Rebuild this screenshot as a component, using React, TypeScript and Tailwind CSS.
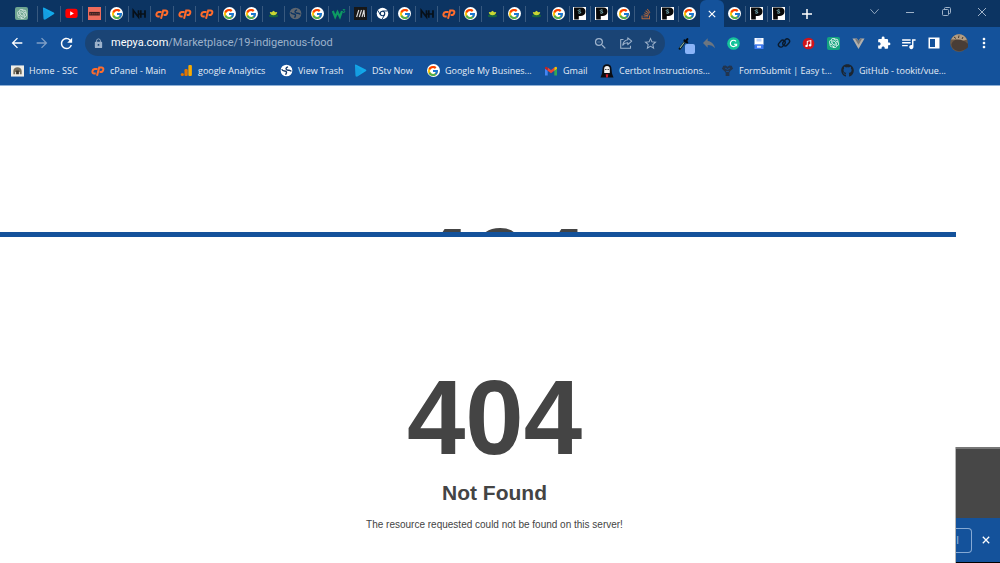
import type { ReactNode } from "react";
import { FcGoogle } from "react-icons/fc";
import { FaGithub, FaStackOverflow } from "react-icons/fa";
import { SiOpenai } from "react-icons/si";
import {
  MdArrowBack,
  MdArrowForward,
  MdExtension,
  MdLock,
  MdMoreVert,
  MdOutlineZoomOut,
  MdQueueMusic,
  MdRefresh,
  MdReply,
  MdStarBorder,
} from "react-icons/md";

function Google() {
  return (
    <span className="flex size-[13px] items-center justify-center rounded-full bg-white">
      <FcGoogle className="size-[12px]" />
    </span>
  );
}

function OpenAi() {
  return (
    <span className="flex size-[13px] items-center justify-center rounded-xs bg-[#6fa591]">
      <SiOpenai className="size-[10px] text-[#dcebe5]" />
    </span>
  );
}

function Dstv() {
  return (
    <svg viewBox="0 0 14 14" className="size-[13px]">
      <path d="M1 1.200Q1.200.200 2.400.700L12.600 5.800q1.500.900 0 2L4 13.300q-2.200.900-2.300-1Z" fill="#12a9ea" />
      <path d="M1 1.200 9 7.600l-5 5.700q-2.200.900-2.300-1Z" fill="#1b8fd6" opacity=".4" />
    </svg>
  );
}

function Youtube() {
  return (
    <svg viewBox="0 0 14 14" className="size-[13px]">
      <rect x="0.400" y="2" width="13.200" height="9.800" rx="2.400" fill="#f00" />
      <path d="m5.600 4.600 4 2.300-4 2.300Z" fill="#fff" />
    </svg>
  );
}

function Coral() {
  return (
    <svg viewBox="0 0 13 13" className="size-[13px]">
      <path d="M0 0h13v13H0Z" fill="#ee6c5c" />
      <path d="M1.200 4.900h10.600v3.600H1.200Z" fill="#3c2020" />
      <path d="M2.200 6h1v1.500h-1Zm2 0h1.200v1.500H4.200Zm2.200 0h1v1.500h-1Zm2 0h1v1.500h-1Zm2 0h.8v1.500h-.8Z" fill="#8c443c" />
    </svg>
  );
}

function Nh() {
  return (
    <svg viewBox="0 0 14 14" className="size-[14px]" fill="none" stroke="#071019" strokeWidth="1.700">
      <path d="M1.300 10.800V3.500L6.500 10V3.200M8.800 3.200v7.600M13 3.200v7.600M6.500 7H13" />
    </svg>
  );
}

function Cpanel() {
  return (
    <svg viewBox="0 0 14 12" className="h-[12px] w-[14px]" fill="none" stroke="#ff6c2c" strokeWidth="2">
      <path d="M6.600 3.900H3.700Q1.900 4 1.400 6.200 1.200 8.500 3.300 8.600h1.400" />
      <path d="M6 10.800 8.200 2.400h2.200q2.300.1 1.900 2.400-.5 2.300-2.600 2.300H8.600" />
    </svg>
  );
}

function Lotus() {
  return (
    <svg viewBox="0 0 14 14" className="size-[13px]">
      <ellipse cx="7" cy="9.600" rx="5" ry="1.500" fill="#17653f" />
      <path d="M3 5.300 5 5.600 7 4l2 1.600 2-.3Q10.500 8.800 7 8.800T3 5.300Z" fill="#c9d832" />
    </svg>
  );
}

function Globe({ dim = false }: { dim?: boolean }) {
  return (
    <svg viewBox="0 0 14 14" className="size-[13px]">
      <circle cx="7" cy="7" r="6.300" fill={dim ? "#5e6670" : "#fff"} />
      <path
        d="M1.800 5.600q1 2 3.200 1.900 2.200.1 2 2L6 11.600M12.300 8q-1.300-1.600-3.200-1.300-2.400.2-2.700-1.600.2-1.600 2.300-2"
        fill="none"
        stroke={dim ? "#0c3462" : "#14396a"}
        strokeWidth="1.500"
      />
    </svg>
  );
}

function W3() {
  return (
    <svg viewBox="0 0 14 14" className="size-[14px]" fill="none" stroke="#0d9a62">
      <path d="m.8 4 2.400 6L5.500 5l2.400 5L10 4" strokeWidth="2.200" />
      <path d="M10.800 2.500h2l-1 1.200q1.300.2 1 1.200t-1.900.4" strokeWidth=".9" />
    </svg>
  );
}

function Mono() {
  return (
    <svg viewBox="0 0 13 13" className="size-[13px]">
      <path d="M0 0h13v13H0Z" fill="#171717" />
      <path d="m2.600 10 2.200-7M5.300 10l2.200-7M8 10l2-7 .5 7" fill="none" stroke="#ddd" strokeWidth="1.100" />
    </svg>
  );
}

function Chrome() {
  return (
    <svg viewBox="0 0 14 14" className="size-[13px]">
      <circle cx="7" cy="7" r="6.200" fill="#fff" />
      <circle cx="7" cy="7" r="2.400" fill="#fff" stroke="#0c3462" strokeWidth="1.200" />
      <path d="M7 4.300h5.500M4.600 8.300 1.900 3.600M9.300 8.500 6.600 13" stroke="#0c3462" />
    </svg>
  );
}

function Ps() {
  return (
    <svg viewBox="0 0 13 13" className="size-[13px]">
      <path d="M0 0h13v13H0Z" fill="#fff" />
      <path d="M1 .5h7.500Q12.500.8 12.500 4.500T8 9H5.800v3.500H1.200Z" fill="#080808" />
      <path d="M7.700 3.100Q5.200 2.300 5.200 3.500q.2.900 1.400 1 1.400.2 1.200 1.200-.6.9-2.600.2" fill="none" stroke="#7fb9c2" />
    </svg>
  );
}

function StackOverflow() {
  return <FaStackOverflow className="size-[12px] text-[#b8693b]" />;
}

function Gmail() {
  return (
    <svg viewBox="0 0 14 14" className="size-[14px]">
      <path d="M1 4v7.500h2.700V5.800Z" fill="#4285f4" />
      <path d="M13 4v7.500h-2.700V5.800Z" fill="#34a853" />
      <path d="M3.700 3.500 7 6l3.300-2.500v3.200L7 9.200 3.700 6.700Z" fill="#ea4335" />
      <path d="M1 4.200Q1.200 1.800 3.700 3.500v3.200L1 4.700Z" fill="#c5221f" />
      <path d="M13 4.200q-.2-2.400-2.700-.7v3.200l2.700-2Z" fill="#fbbc04" />
    </svg>
  );
}

function Certbot() {
  return (
    <svg viewBox="0 0 14 14" className="size-[14px]">
      <path d="M2.500 5Q2.500.3 7 .3T11.500 5l.5 4.500 1.500 4H.5l1.500-4Z" fill="#0b0d12" />
      <path d="M4.200 4.800Q4.300 2 7 2t2.800 2.800V9H4.200Z" fill="#f2f2f2" />
      <path d="M5.200 5h1.200v1H5.200Zm2.400 0h1.200v1H7.600Z" fill="#222" />
      <path d="M5.700 10.200h2.600l-.5 3.300H6.200Z" fill="#d51f2b" />
    </svg>
  );
}

function FormSubmit() {
  return (
    <svg viewBox="0 0 14 14" className="size-[13px]">
      <path d="M2.500 2 5 1.500 7 3l2-1.500 2.500.5 1.500 3-2.500 2-.8 1L9 9.500V13H5V9.500L4 8 1 5Z" fill="#22354f" />
      <path d="M4.500 4.500 7 5.800l2.500-1.300M5.500 8h3" fill="none" stroke="#14529b" />
    </svg>
  );
}

function Analytics() {
  return (
    <svg viewBox="0 0 14 14" className="size-[13px]">
      <rect x="9" y="1" width="3.800" height="12" rx="1.200" fill="#f9ab00" />
      <rect x="4.800" y="5.500" width="3.500" height="7.500" rx="1.200" fill="#e37400" />
      <circle cx="2.500" cy="11.300" r="1.700" fill="#e37400" />
    </svg>
  );
}

function Ssc() {
  return (
    <svg viewBox="0 0 14 12" className="h-[12px] w-[13px]">
      <path d="M0 0h14v12H0Z" fill="#efede6" />
      <path d="M2.500 9.500V6Q3 2 7 2t4.500 4v3.500h-2V7h-5v2.500Z" fill="#77705f" />
      <path d="M5.500 5.500h3v4h-3Z" fill="#39342b" />
    </svg>
  );
}

function Share() {
  return (
    <svg viewBox="0 0 14 14" className="size-[14px]" fill="none" stroke="currentColor" strokeWidth="1.100" strokeLinejoin="round">
      <path d="M4.500 3.500H1.700v8.800h9.800V9.800M8.800 1.800l3.900 3.400-3.900 3.400V6.700Q5.500 6.500 3.800 9.200 4.500 4.500 8.800 3.800Z" />
    </svg>
  );
}

function Cross({ className }: { className: string }) {
  return (
    <svg viewBox="0 0 10 10" className={className} fill="none" stroke="currentColor">
      <path d="m1 1 8 8M9 1 1 9" />
    </svg>
  );
}

type Item = { name: string; icon: ReactNode };

const google: Item = { name: "Google", icon: <Google /> };
const cpanel: Item = { name: "cPanel", icon: <Cpanel /> };
const nh: Item = { name: "NH", icon: <Nh /> };
const lotus: Item = { name: "Lotus", icon: <Lotus /> };
const ps: Item = { name: "PS", icon: <Ps /> };

const firstTabs: Item[] = [
  { name: "DStv", icon: <Dstv /> },
  { name: "YouTube", icon: <Youtube /> },
  { name: "Coral", icon: <Coral /> },
  google,
  nh,
  cpanel,
  cpanel,
  cpanel,
];

const middleTabs: Item[] = [
  google,
  google,
  lotus,
  { name: "Trash", icon: <Globe dim /> },
  google,
  { name: "W3", icon: <W3 /> },
  { name: "M", icon: <Mono /> },
  { name: "Chrome", icon: <Chrome /> },
  google,
  nh,
  cpanel,
  google,
  lotus,
  google,
  lotus,
  google,
  ps,
  ps,
  google,
  { name: "Stack Overflow", icon: <StackOverflow /> },
  ps,
  google,
];

const lastTabs: Item[] = [google, ps, ps];

function TabGroup({ tabs, className, closed }: { tabs: Item[]; className: string; closed?: boolean }) {
  return (
    <div className={`flex items-center ${className}`}>
      {tabs.map((tab, i) => (
        <button
          key={i}
          aria-label={tab.name}
          className={`flex h-[16px] min-w-0 flex-1 items-center justify-center ${
            closed || i < tabs.length - 1 ? "border-r border-[#38597f]" : ""
          }`}
        >
          {tab.icon}
        </button>
      ))}
    </div>
  );
}

const extensions: Item[] = [
  {
    name: "Color picker",
    icon: (
      <span className="relative flex size-[20px] items-center justify-center">
        <svg viewBox="0 0 14 14" className="size-[13px]" fill="none" strokeLinecap="round">
          <path d="m3 12.500 6-8" stroke="#0a1210" strokeWidth="2.400" />
          <path d="m3.500 11.500 4-5.300" stroke="#8fb7a6" strokeWidth="1.100" />
          <path d="m8 3.500 3 2.300M9.500 4.500l1.700-2.300" stroke="#05080c" strokeWidth="2.200" />
        </svg>
        <span className="absolute -right-[1px] -bottom-[1px] size-[10px] rounded-xs bg-[#8ab4f8]" />
      </span>
    ),
  },
  { name: "Reply", icon: <MdReply className="size-[16px] text-[#6d7680]" /> },
  {
    name: "Grammarly",
    icon: (
      <svg viewBox="0 0 14 14" className="size-[13px]">
        <circle cx="7" cy="7" r="6.800" fill="#15c39a" />
        <path d="M9.700 4.800A3.400 3.400 0 1 0 10.300 7.800H7.600M10.300 7.600v2.400" fill="none" stroke="#fff" strokeWidth="1.300" />
      </svg>
    ),
  },
  {
    name: "Save",
    icon: (
      <svg viewBox="0 0 12 13" className="h-[13px] w-[12px]">
        <path d="M1.500 1h9v7h-9Z" fill="#fff" />
        <path d="M1.500 7.300h9V12h-9Z" fill="#3d78ef" />
        <path d="M4 8.800h4v2H4Z" fill="#dbe7ff" />
        <path d="M3.500 1.500h5v3h-5Z" fill="#bdd2fb" />
      </svg>
    ),
  },
  {
    name: "Link",
    icon: (
      <svg viewBox="0 0 14 14" className="size-[14px]" fill="none" stroke="#0a1a2c" strokeWidth="1.400">
        <rect x="1" y="5.300" width="7.600" height="4.800" rx="2.400" transform="rotate(-48 4.800 7.700)" />
        <rect x="5.400" y="4" width="7.600" height="4.800" rx="2.400" transform="rotate(-48 9.200 6.400)" />
      </svg>
    ),
  },
  {
    name: "Music",
    icon: (
      <svg viewBox="0 0 14 14" className="size-[13px]">
        <circle cx="7" cy="7" r="6.300" fill="#d0141b" />
        <path d="M5.700 9.500V4.700l3.800-.9v4.800" fill="none" stroke="#fff" strokeWidth="1.100" />
        <circle cx="4.900" cy="9.600" r="1.300" fill="#fff" />
        <circle cx="8.700" cy="8.800" r="1.300" fill="#fff" />
      </svg>
    ),
  },
  {
    name: "ChatGPT",
    icon: (
      <span className="flex size-[13px] items-center justify-center rounded-xs bg-[#14a37f]">
        <SiOpenai className="size-[10px] text-white" />
      </span>
    ),
  },
  {
    name: "Vue",
    icon: (
      <svg viewBox="0 0 14 14" className="size-[13px]">
        <path d="M.5 1.500h4.800L7 4.400l1.700-2.900h4.800L7 13Z" fill="#b2b0ac" />
        <path d="M3 1.500h2.300L7 4.400l1.700-2.900H11L7 8.400Z" fill="#77797b" />
      </svg>
    ),
  },
  { name: "Extensions", icon: <MdExtension className="size-[14px] text-white" /> },
  { name: "Media", icon: <MdQueueMusic className="size-[17px] text-white" /> },
  {
    name: "Side panel",
    icon: (
      <svg viewBox="0 0 12 12" className="size-[12px]">
        <path d="M.5.5h11v11H.5Z" fill="#fff" />
        <path d="M2 2h5v8H2Z" fill="#14529b" />
      </svg>
    ),
  },
  {
    name: "Profile",
    icon: (
      <svg viewBox="0 0 18 18" className="size-[18px]">
        <circle cx="9" cy="9" r="8.800" fill="#6d5945" />
        <path d="M1 5.500Q4 .2 9 .2t8 5.300L12 7 6 5.500Z" fill="#b29d84" />
        <path d="M1.500 10Q3 5.500 8 5.500t9 3.500-2 6.500T5 16 1.500 10Z" fill="#493d36" />
        <path d="m4 3 2 1.500M9 1.500 8.500 4M13 3l-1 2" stroke="#463a2e" />
      </svg>
    ),
  },
  { name: "Menu", icon: <MdMoreVert className="size-[16px] text-white" /> },
];

const bookmarks: { label: string; icon: ReactNode; width: string }[] = [
  { label: "Home - SSC", icon: <Ssc />, width: "w-[81px]" },
  { label: "cPanel - Main", icon: <Cpanel />, width: "w-[88px]" },
  { label: "google Analytics", icon: <Analytics />, width: "w-[100px]" },
  { label: "View Trash", icon: <Globe />, width: "w-[74px]" },
  { label: "DStv Now", icon: <Dstv />, width: "w-[73px]" },
  { label: "Google My Busines...", icon: <Google />, width: "w-[118px]" },
  { label: "Gmail", icon: <Gmail />, width: "w-[56px]" },
  { label: "Certbot Instructions...", icon: <Certbot />, width: "w-[120px]" },
  { label: "FormSubmit | Easy t...", icon: <FormSubmit />, width: "w-[120px]" },
  { label: "GitHub - tookit/vue...", icon: <FaGithub className="size-[13px] text-[#1b2530]" />, width: "w-[120px]" },
];

const cell = "flex h-[26px] w-[25px] shrink-0 items-center justify-center";
const windowCell = "flex h-[22px] w-9 items-center justify-center text-[#9fb2c8]";

function TabStrip() {
  return (
    <div className="flex h-[27px] items-center bg-[#0c3462]">
      <div className="flex w-[38px] shrink-0 items-center border-r border-[#38597f] pl-[15px]">
        <button aria-label="ChatGPT" className="flex h-[16px] items-center">
          <OpenAi />
        </button>
      </div>
      <TabGroup tabs={firstTabs} className="w-[181px] shrink-0" closed />
      <TabGroup tabs={middleTabs} className="w-[481px] shrink-0" />
      <button
        aria-label="Close tab"
        className="flex h-full w-6 shrink-0 items-center justify-center rounded-t-md bg-[#14529b] text-white"
      >
        <Cross className="size-[8px] stroke-[1.5]" />
      </button>
      <TabGroup tabs={lastTabs} className="w-[66px] shrink-0" closed />
      <button aria-label="New tab" className="flex h-[22px] w-[34px] items-center justify-center text-white">
        <svg viewBox="0 0 10 10" className="size-[10px]" stroke="currentColor" strokeWidth="1.500">
          <path d="M5 0v10M0 5h10" />
        </svg>
      </button>
      <div className="ml-auto flex pb-[4px]">
        <button aria-label="Search tabs" className={windowCell}>
          <svg viewBox="0 0 10 10" className="size-[9px]" fill="none" stroke="currentColor">
            <path d="m.5 2.500 4.500 5 4.500-5" />
          </svg>
        </button>
        <button aria-label="Minimize" className={windowCell}>
          <svg viewBox="0 0 8 8" className="size-[8px]" stroke="currentColor">
            <path d="M0 4.500h8" />
          </svg>
        </button>
        <button aria-label="Restore" className={windowCell}>
          <svg viewBox="0 0 9 9" className="size-[9px]" fill="none" stroke="currentColor">
            <rect x=".5" y="2.500" width="6" height="6" rx="1" />
            <path d="M2.500 2.500V1.500q0-1 1-1h4q1 0 1 1v4q0 1-1 1h-1" />
          </svg>
        </button>
        <button aria-label="Close window" className={windowCell}>
          <Cross className="size-[10px]" />
        </button>
      </div>
    </div>
  );
}

function Toolbar() {
  return (
    <div className="flex h-8 items-center px-[4px] text-white">
      <button aria-label="Back" className={cell}>
        <MdArrowBack className="size-[16px]" />
      </button>
      <button aria-label="Forward" className={`${cell} text-[#7f9fc6]`}>
        <MdArrowForward className="size-[16px]" />
      </button>
      <button aria-label="Reload" className={cell}>
        <MdRefresh className="size-[17px]" />
      </button>
      <div className="mx-[6px] flex h-[26px] min-w-0 flex-1 items-center rounded-full bg-[#1a4475] pl-2 font-['Roboto',sans-serif] text-[11px] text-[#9db2cb]">
        <MdLock className="mr-[7px] size-[11px] shrink-0" />
        <label htmlFor="address" className="text-white">
          mepya.com
        </label>
        <input
          id="address"
          defaultValue="/Marketplace/19-indigenous-food"
          className="min-w-0 flex-1 bg-transparent outline-none"
        />
        <button aria-label="Zoom" className={cell}>
          <MdOutlineZoomOut className="size-[15px]" />
        </button>
        <button aria-label="Share" className={cell}>
          <Share />
        </button>
        <button aria-label="Bookmark" className={`${cell} mr-[2px]`}>
          <MdStarBorder className="size-[15px]" />
        </button>
      </div>
      {extensions.map((item) => (
        <button key={item.name} aria-label={item.name} className={cell}>
          {item.icon}
        </button>
      ))}
    </div>
  );
}

function Bookmarks() {
  return (
    <nav className="flex h-[27px] items-start overflow-hidden border-b border-[#8fb0d6] pl-[10px]">
      {bookmarks.map((b) => (
        <a
          key={b.label}
          href="#"
          className={`flex h-[23px] shrink-0 items-center gap-[5px] text-[9px] whitespace-nowrap text-[#e6edf6] ${b.width}`}
        >
          <span className="flex w-[14px] shrink-0 justify-center">{b.icon}</span>
          {b.label}
        </a>
      ))}
    </nav>
  );
}

export default function App() {
  return (
    <div className="flex min-h-screen flex-col bg-white font-['Liberation_Sans',sans-serif] text-[#444]">
      <header className="bg-[#14529b] font-['Open_Sans','Noto_Sans',sans-serif]">
        <TabStrip />
        <Toolbar />
        <Bookmarks />
      </header>
      <section className="flex h-[146px] items-end justify-center overflow-hidden">
        <p className="h-[19px] text-[105px] leading-[106px] font-bold">404</p>
      </section>
      <div className="mr-[44px] h-[5px] bg-[#14529b]" />
      <div className="flex flex-1">
        <main className="flex flex-1 flex-col items-center pt-32 pl-[34px]">
          <h1 className="text-[105px] leading-[106px] font-bold">404</h1>
          <h2 className="mt-[10px] text-[21px] leading-6 font-bold">Not Found</h2>
          <p className="mt-3 text-[10px] leading-4">The resource requested could not be found on this server!</p>
        </main>
        <aside className="flex w-[45px] flex-col self-end overflow-hidden border-l border-[#b5b5b5]">
          <div className="h-[71px] border-t-2 border-[#777] bg-[#474747]" />
          <div className="flex h-[44px] items-center justify-between bg-[#14529b] pr-[10px] text-white">
            <button className="h-[25px] w-4 rounded-r-sm border border-l-0 border-[#86a9d4] pr-3 text-[10px] text-[#a9c1df]">
              l
            </button>
            <button aria-label="Dismiss">
              <Cross className="size-[8px] stroke-[1.6]" />
            </button>
          </div>
          <div className="h-px bg-black" />
        </aside>
      </div>
    </div>
  );
}
